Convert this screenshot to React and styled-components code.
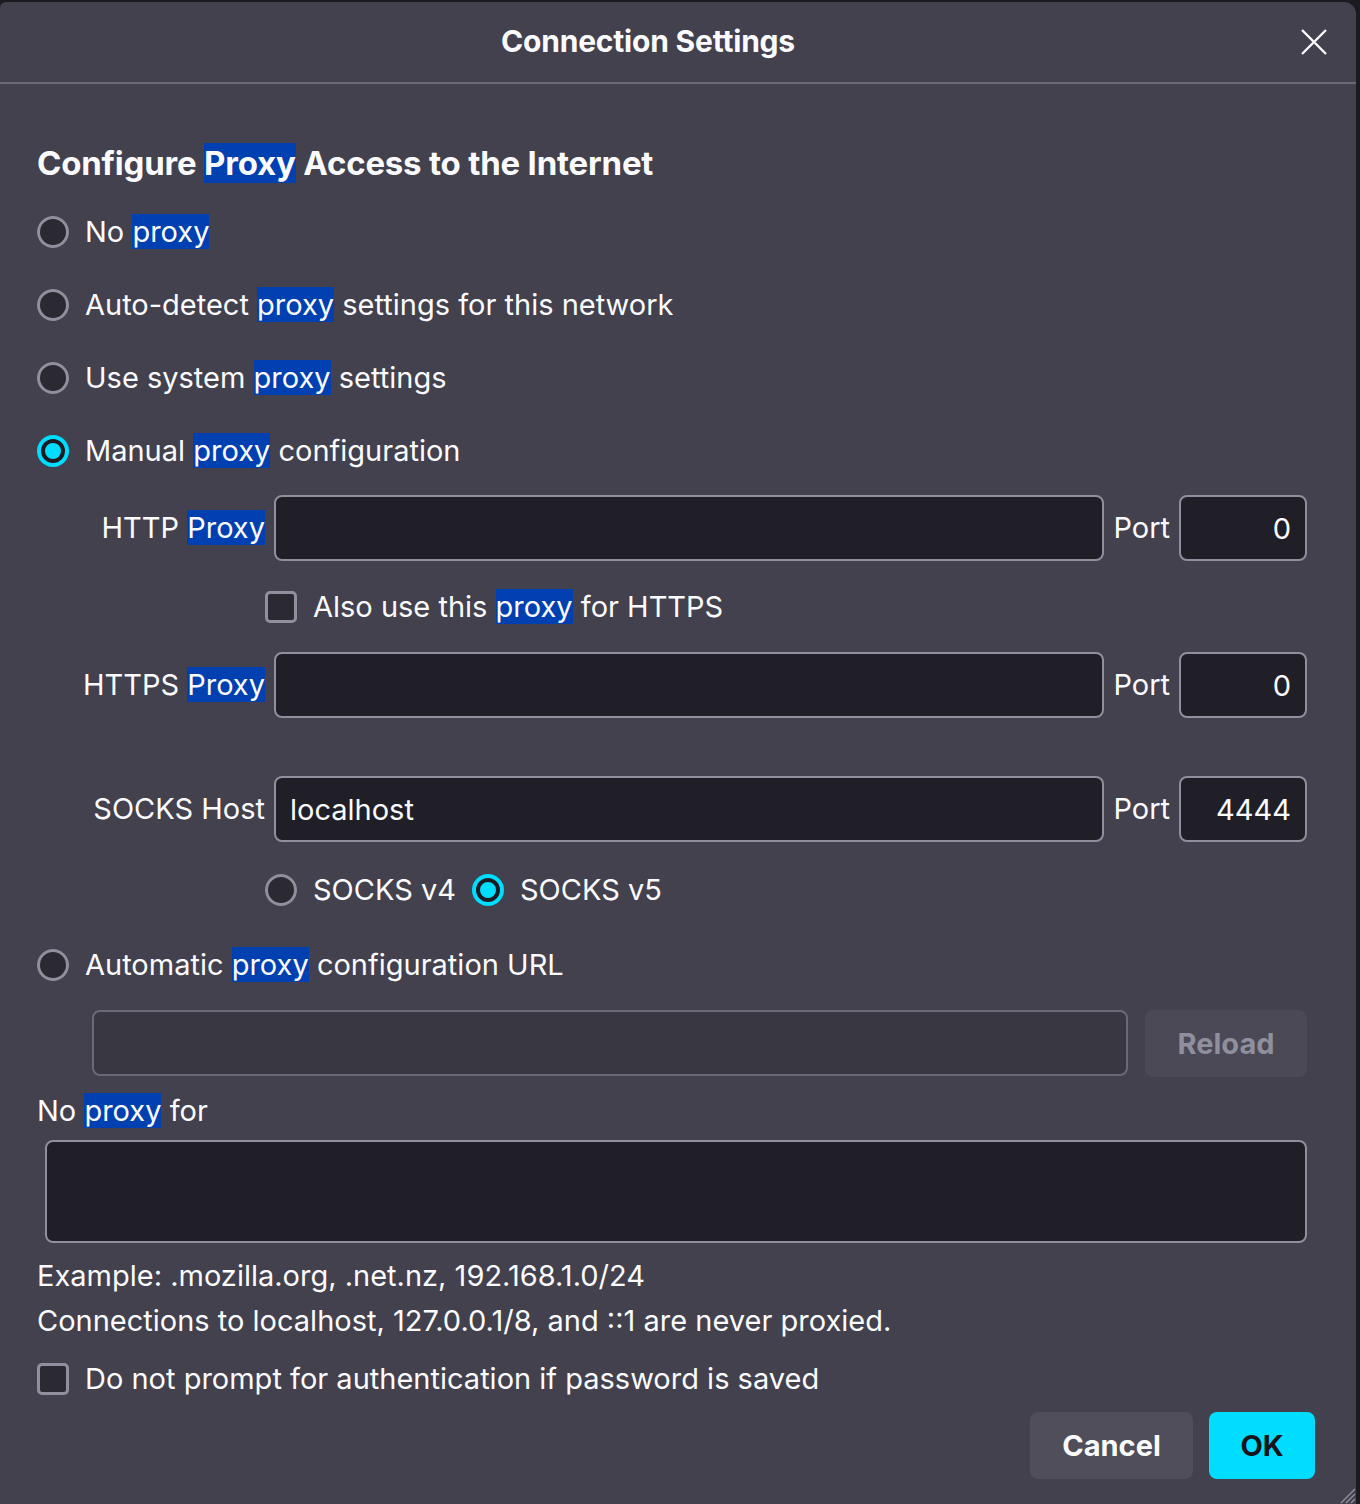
import React from "react";
import styled, { createGlobalStyle } from "styled-components";

const GlobalStyle = createGlobalStyle`
	html, body {
		margin: 0;
		padding: 0;
		background: #1c1b22;
	}
	body {
		font-family: Inter, "Noto Sans", "Liberation Sans", sans-serif;
		color: #fbfbfe;
	}
	* {
		box-sizing: border-box;
	}
`;

const Dialog = styled.div`
	position: relative;
	width: 1356px;
	height: 1502px;
	margin-top: 2px;
	background: #42414d;
	border-radius: 6px 12px 0 0;
	overflow: hidden;
`;

const Header = styled.div`
	position: relative;
	height: 82px;
	display: flex;
	align-items: center;
	justify-content: center;
	padding-right: 60px;
	border-bottom: 2px solid #6b6a74;
`;

const Title = styled.h1`
	margin: 0 0 2px 0;
	font-size: 30px;
	font-weight: 700;
	letter-spacing: -0.2px;
`;

const CloseButton = styled.button`
	position: absolute;
	right: 28px;
	top: 26px;
	width: 28px;
	height: 28px;
	padding: 0;
	border: 0;
	background: transparent;
	display: flex;
	align-items: center;
	justify-content: center;
`;

const Body = styled.div`
	padding: 59px 49px 0 37px;
`;

const Heading = styled.h2`
	margin: 0 0 12px 0;
	height: 40px;
	line-height: 40px;
	font-size: 33px;
	font-weight: 700;
	letter-spacing: -0.2px;
`;

const Hl = styled.span`
	background: #0040b0;
`;

const OptionRow = styled.label`
	display: flex;
	align-items: center;
	gap: 16px;
	height: ${(p) => p.$h || 73}px;
	margin-left: ${(p) => p.$indent || 0}px;
	margin-top: ${(p) => p.$mt || 0}px;
	font-size: 29px;
	line-height: 36px;
	white-space: nowrap;
`;

const Radio = styled.span`
	flex: none;
	width: 32px;
	height: 32px;
	border-radius: 50%;
	background: ${(p) => (p.$checked ? "#00ddff" : "#2b2a33")};
	box-shadow: ${(p) =>
		p.$checked
			? "inset 0 0 0 4px #00ddff, inset 0 0 0 8px #1c1b22"
			: "inset 0 0 0 3px #8f8f9d"};
`;

const Checkbox = styled.span`
	flex: none;
	width: 32px;
	height: 32px;
	border-radius: 5px;
	background: #2b2a33;
	border: 3px solid #8f8f9d;
`;

const ProxyGrid = styled.div`
	display: grid;
	grid-template-columns: 228px 1fr auto 128px;
	column-gap: 9px;
	align-items: center;
	margin-top: 8px;
	font-size: 29px;
`;

const FieldLabel = styled.span`
	text-align: right;
	white-space: nowrap;
	line-height: 36px;
`;

const PortLabel = styled.span`
	line-height: 36px;
`;

const Input = styled.div`
	height: 66px;
	border-radius: 8px;
	border: 2px solid ${(p) => (p.$disabled ? "#6b6a74" : "#8f8f9d")};
	background: ${(p) => (p.$disabled ? "#393842" : "#201f27")};
	display: flex;
	align-items: center;
	justify-content: ${(p) => (p.$right ? "flex-end" : "flex-start")};
	padding: 0 14px;
	font-size: 29px;
	color: #fbfbfe;
`;

const Spacer = styled.div`
	grid-column: 1 / -1;
	height: ${(p) => p.$h}px;
	display: flex;
	align-items: center;
`;

const UrlRow = styled.div`
	display: flex;
	gap: 17px;
	margin: 18px 0 0 55px;

	& > ${Input} {
		flex: 1;
	}
`;

const ReloadButton = styled.button`
	flex: none;
	width: 162px;
	height: 67px;
	border: 0;
	border-radius: 8px;
	background: #4a4955;
	color: #8f8f9d;
	font-family: inherit;
	font-size: 29px;
	font-weight: 700;
`;

const PlainLine = styled.div`
	font-size: 29px;
	line-height: ${(p) => p.$lh || 45}px;
	margin-top: ${(p) => p.$mt || 0}px;
	margin-bottom: ${(p) => p.$mb || 0}px;
	white-space: nowrap;
`;

const TextArea = styled.div`
	margin: 0 0 10px 8px;
	height: 103px;
	border-radius: 8px;
	border: 2px solid #8f8f9d;
	background: #201f27;
`;

const Footer = styled.div`
	display: flex;
	justify-content: flex-end;
	gap: 16px;
	padding: 11px 41px 0 0;
`;

const Button = styled.button`
	width: ${(p) => p.$w}px;
	height: 67px;
	padding: 0;
	border: 0;
	border-radius: 8px;
	font-family: inherit;
	font-size: 29px;
	font-weight: 700;
	background: ${(p) => (p.$primary ? "#00ddff" : "#4f4e5a")};
	color: ${(p) => (p.$primary ? "#15141a" : "#fbfbfe")};
`;

const Grip = styled.svg`
	position: absolute;
	right: 0;
	bottom: 0;
`;

const EdgeShade = styled.div`
	position: fixed;
	top: 0;
	right: 0;
	width: 4px;
	height: 100%;
	background: #1c1b22;
`;

const proxy = <Hl>proxy</Hl>;

export default function App() {
	return (
		<>
			<GlobalStyle />
			<Dialog>
				<Header>
					<Title>Connection Settings</Title>
					<CloseButton aria-label="Close">
						<svg width="26" height="26" viewBox="0 0 26 26">
							<path d="M1 1 L25 25 M25 1 L1 25" stroke="#fbfbfe" strokeWidth="2.4" />
						</svg>
					</CloseButton>
				</Header>
				<Body>
					<Heading>
						Configure <Hl>Proxy</Hl> Access to the Internet
					</Heading>
					<OptionRow>
						<Radio />
						<span>No {proxy}</span>
					</OptionRow>
					<OptionRow>
						<Radio />
						<span>Auto-detect {proxy} settings for this network</span>
					</OptionRow>
					<OptionRow>
						<Radio />
						<span>Use system {proxy} settings</span>
					</OptionRow>
					<OptionRow>
						<Radio $checked />
						<span>Manual {proxy} configuration</span>
					</OptionRow>

					<ProxyGrid>
						<FieldLabel>
							HTTP <Hl>Proxy</Hl>
						</FieldLabel>
						<Input />
						<PortLabel>Port</PortLabel>
						<Input $right>0</Input>

						<Spacer $h={91}>
							<OptionRow as="label" $h={91} $indent={228}>
								<Checkbox />
								<span>Also use this {proxy} for HTTPS</span>
							</OptionRow>
						</Spacer>

						<FieldLabel>
							HTTPS <Hl>Proxy</Hl>
						</FieldLabel>
						<Input />
						<PortLabel>Port</PortLabel>
						<Input $right>0</Input>

						<Spacer $h={58} />

						<FieldLabel>SOCKS Host</FieldLabel>
						<Input>localhost</Input>
						<PortLabel>Port</PortLabel>
						<Input $right>4444</Input>
					</ProxyGrid>

					<OptionRow $h={96} $indent={228}>
						<Radio />
						<span>SOCKS v4</span>
						<Radio $checked />
						<span>SOCKS v5</span>
					</OptionRow>
					<OptionRow $h={54}>
						<Radio />
						<span>Automatic {proxy} configuration URL</span>
					</OptionRow>

					<UrlRow>
						<Input $disabled />
						<ReloadButton disabled>Reload</ReloadButton>
					</UrlRow>

					<PlainLine $lh={36} $mt={16} $mb={11}>
						No {proxy} for
					</PlainLine>
					<TextArea />
					<PlainLine>Example: .mozilla.org, .net.nz, 192.168.1.0/24</PlainLine>
					<PlainLine>Connections to localhost, 127.0.0.1/8, and ::1 are never proxied.</PlainLine>
					<OptionRow $h={44} $mt={14}>
						<Checkbox />
						<span>Do not prompt for authentication if password is saved</span>
					</OptionRow>
				</Body>
				<Footer>
					<Button $w={163}>Cancel</Button>
					<Button $primary $w={106}>
						OK
					</Button>
				</Footer>
				<Grip width="20" height="20" viewBox="0 0 20 20">
					<path d="M19 5 L5 19 M19 10 L10 19 M19 15 L15 19" stroke="#8f8f9d" strokeWidth="1.4" />
				</Grip>
			</Dialog>
			<EdgeShade />
		</>
	);
}
